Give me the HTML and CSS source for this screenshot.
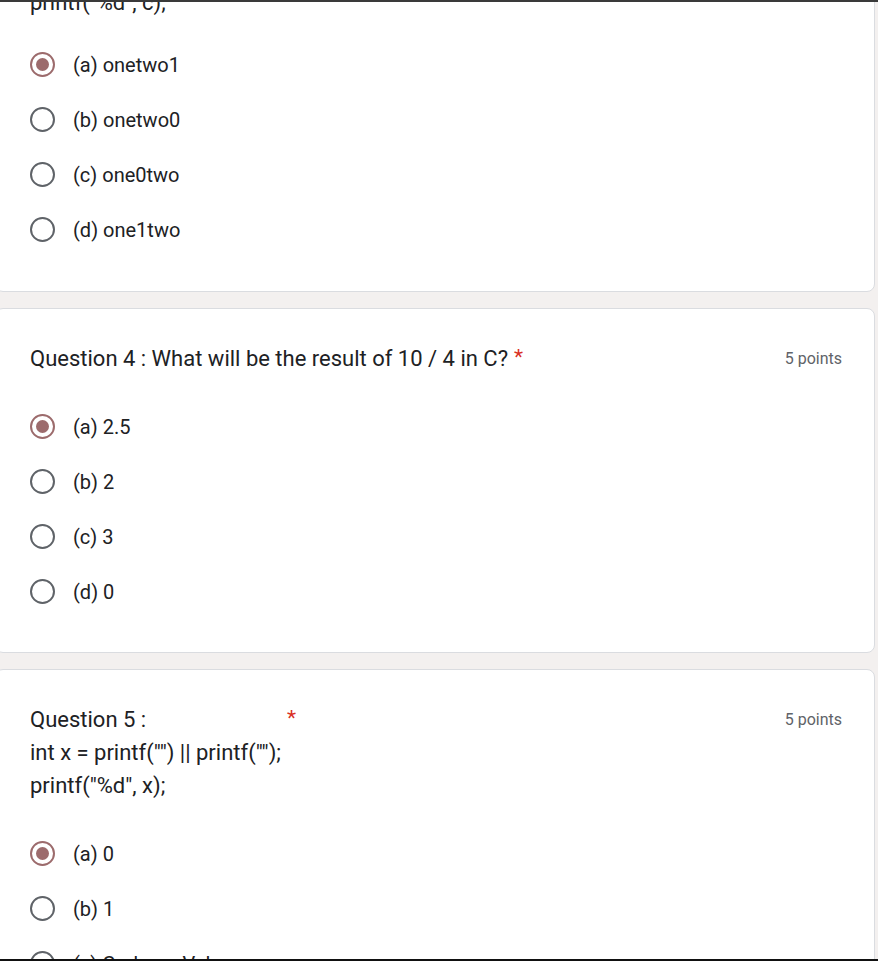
FILE: index.html
```html
<!DOCTYPE html>
<html lang="en">
<head>
<meta charset="utf-8">
<title>Quiz</title>
<link rel="stylesheet" href="styles.css">
</head>
<body>
<div class="topbar"></div>
<div class="bottombar"></div>
<main class="form">
  <section class="card card-first">
    <div class="head">
      <div class="title">
        <div>int c = printf("one") &amp;&amp; printf("two");</div>
        <div>printf("%d", c);</div>
      </div>
    </div>
    <div class="options">
      <div class="opt"><span class="radio checked"></span><span class="label">(a) onetwo1</span></div>
      <div class="opt"><span class="radio"></span><span class="label">(b) onetwo0</span></div>
      <div class="opt"><span class="radio"></span><span class="label">(c) one0two</span></div>
      <div class="opt"><span class="radio"></span><span class="label">(d) one1two</span></div>
    </div>
  </section>

  <section class="card">
    <div class="head">
      <div class="title">
        <div>Question 4 : What will be the result of 10 / 4 in C?</div>
      </div>
      <span class="req">*</span>
      <span class="points">5 points</span>
    </div>
    <div class="options">
      <div class="opt"><span class="radio checked"></span><span class="label">(a) 2.5</span></div>
      <div class="opt"><span class="radio"></span><span class="label">(b) 2</span></div>
      <div class="opt"><span class="radio"></span><span class="label">(c) 3</span></div>
      <div class="opt"><span class="radio"></span><span class="label">(d) 0</span></div>
    </div>
  </section>

  <section class="card">
    <div class="head">
      <div class="title">
        <div>Question 5 :</div>
        <div>int x = printf("") || printf("");</div>
        <div>printf("%d", x);</div>
      </div>
      <span class="req">*</span>
      <span class="points">5 points</span>
    </div>
    <div class="options">
      <div class="opt"><span class="radio checked"></span><span class="label">(a) 0</span></div>
      <div class="opt"><span class="radio"></span><span class="label">(b) 1</span></div>
      <div class="opt"><span class="radio"></span><span class="label">(c) Garbage Value</span></div>
      <div class="opt"><span class="radio"></span><span class="label">(d) Error</span></div>
    </div>
  </section>
</main>
</body>
</html>
```
FILE: styles.css
```css
html, body {
  margin: 0;
  padding: 0;
}
body {
  background: #f3f0ef;
  font-family: Roboto, "Noto Sans", Arial, sans-serif;
  color: #202124;
  overflow: hidden;
}
.topbar {
  position: fixed;
  left: 0;
  top: 0;
  width: 878px;
  height: 2px;
  background: #3a3a3a;
  z-index: 5;
}
.bottombar {
  position: fixed;
  left: 0;
  bottom: 0;
  width: 878px;
  height: 2px;
  background: #111;
  z-index: 5;
}
.form {
  margin-left: -5px;
  width: 880px;
  margin-top: -81px;
  display: flex;
  flex-direction: column;
  gap: 16px;
}
.card {
  background: #fff;
  border: 1px solid #dadce0;
  border-radius: 8px;
  padding: 33px 32px 33px 34px;
}
.card-first {
  padding-bottom: 34px;
}
.head {
  display: flex;
  align-items: flex-start;
  margin-bottom: 24px;
}
.card-first .head {
  margin-bottom: 18px;
}
.title {
  font-size: 22px;
  line-height: 33px;
  letter-spacing: 0;
}
.req {
  color: #d93025;
  font-size: 21px;
  line-height: 30px;
  margin-left: 6px;
}
.points {
  margin-left: auto;
  font-size: 16px;
  line-height: 33px;
  color: #5f6368;
}
.options {
  display: flex;
  flex-direction: column;
}
.opt {
  height: 55px;
  display: flex;
  align-items: center;
}
.radio {
  box-sizing: border-box;
  width: 25px;
  height: 25px;
  border: 2px solid #5f6368;
  border-radius: 50%;
  margin-right: 18px;
  display: flex;
  align-items: center;
  justify-content: center;
  flex: none;
}
.radio.checked {
  border-color: #9c6b6c;
}
.radio.checked::after {
  content: "";
  width: 13px;
  height: 13px;
  border-radius: 50%;
  background: #9c6b6c;
}
.label {
  font-size: 20px;
  line-height: 24px;
}
```
